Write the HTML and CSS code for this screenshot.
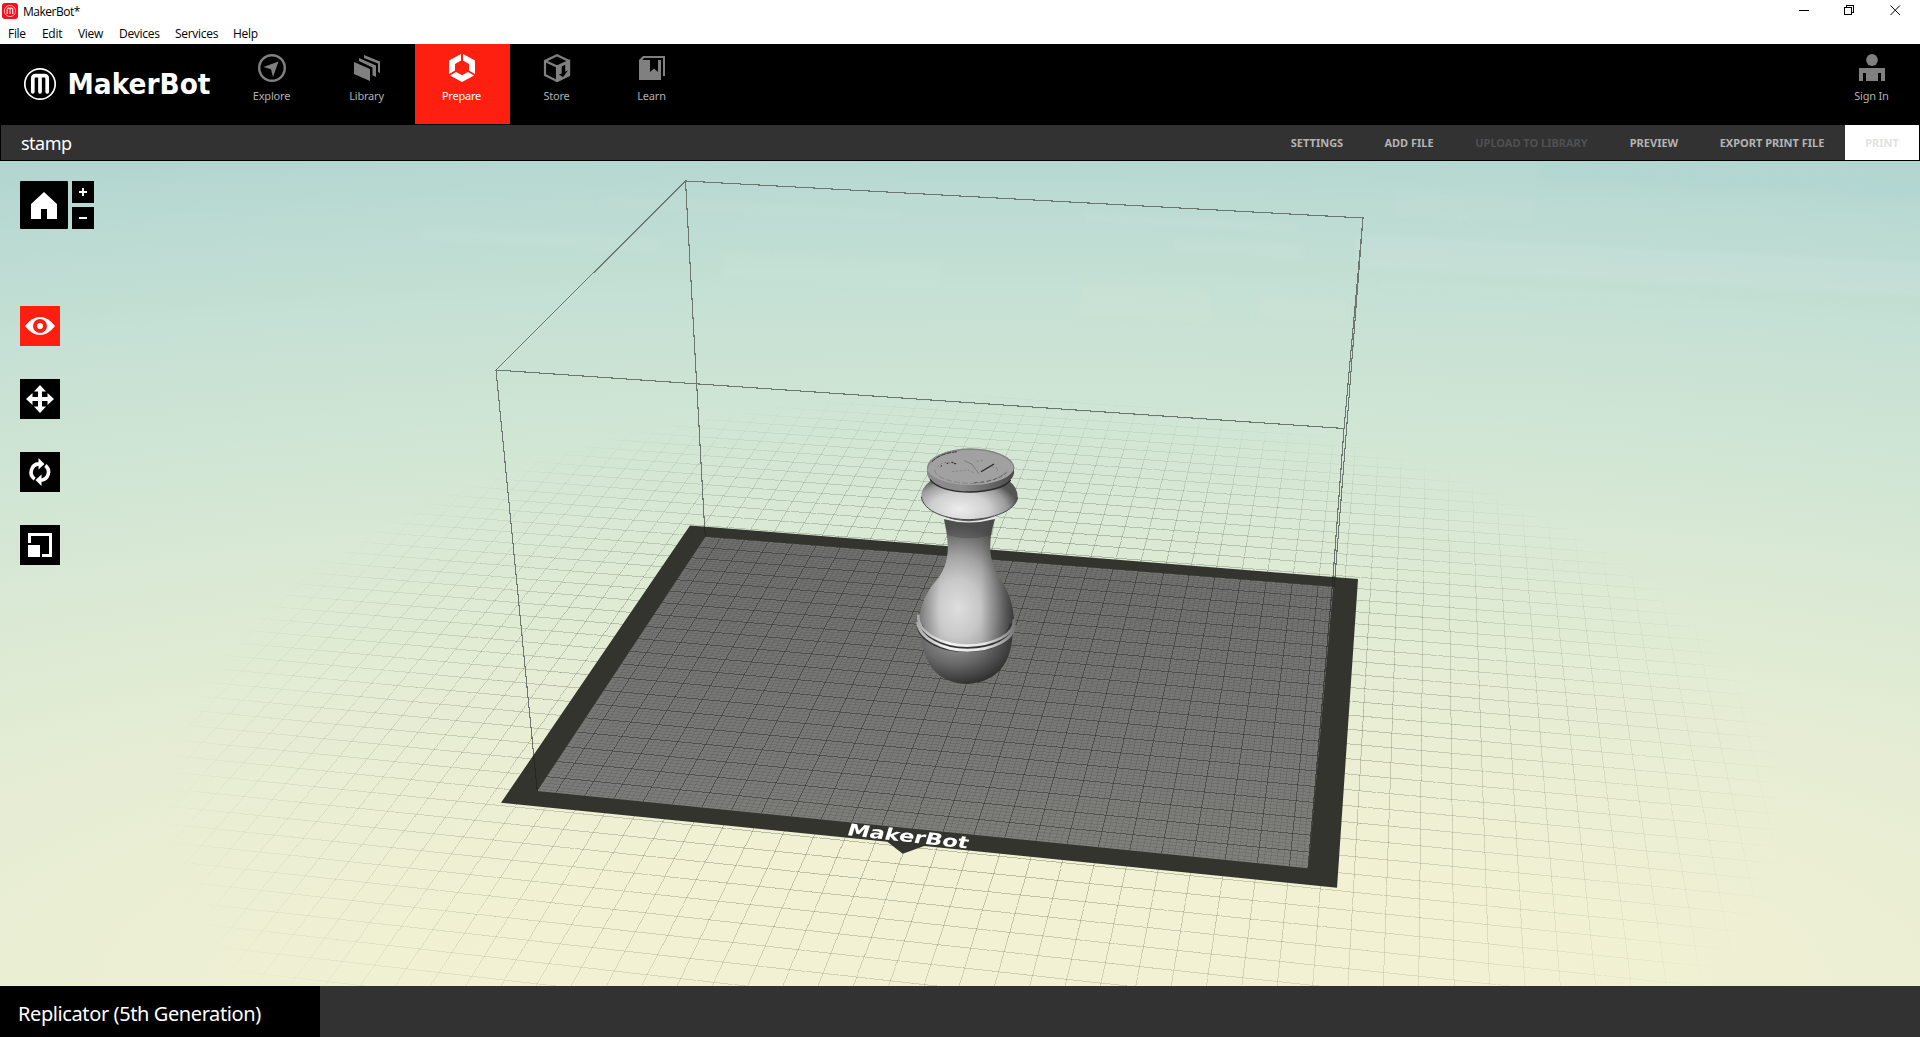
FILE: index.html
```html
<!DOCTYPE html>
<html lang="en">
<head>
<meta charset="utf-8">
<title>MakerBot</title>
<link rel="stylesheet" href="styles.css">
</head>
<body>
<div class="app">
  <header class="titlebar">
    <svg class="app-icon" viewBox="0 0 16 16"><rect width="16" height="16" rx="3" fill="#fb0d1b"/><circle cx="8" cy="8" r="5.6" fill="none" stroke="#ffb3b5" stroke-width="1"/><path d="M5.3 11V6.2q0-1 1-1h3.4q1 0 1 1V11M8 5.2V11" fill="none" stroke="#ffc9ca" stroke-width="1.4"/></svg>
    <span class="app-title">MakerBot*</span>
    <svg class="win-controls" viewBox="0 0 110 20" shape-rendering="crispEdges">
      <path d="M4 10.5h10" stroke="#000"/>
      <path d="M49.500 7.500h7v7h-7zM51.500 7v-1.500h7v7H57" fill="none" stroke="#000"/>
      <path d="M95.500 5.500l9.500 9.500M105 5.500l-9.500 9.500" stroke="#000" shape-rendering="auto"/>
    </svg>
  </header>
  <nav class="menubar">
    <span class="m-file">File</span><span class="m-edit">Edit</span><span class="m-view">View</span><span class="m-devices">Devices</span><span class="m-services">Services</span><span class="m-help">Help</span>
  </nav>

  <div class="mainbar">
    <svg class="logo" viewBox="0 0 200 40">
      <circle cx="20" cy="20" r="15.200" fill="none" stroke="#fff" stroke-width="1.700"/>
      <path d="M12.800 27.800V14.500q0-2.800 2.800-2.800h8.800q2.800 0 2.800 2.800v13.300M20 12v15.800" fill="none" stroke="#fff" stroke-width="3.700" stroke-linecap="round"/>
      <text class="wordmark" x="47.500" y="29.500" textLength="143" lengthAdjust="spacingAndGlyphs">MakerBot</text>
    </svg>
    <div class="tabs">
      <div class="tab">
        <svg viewBox="0 0 28 28"><circle cx="14" cy="14" r="12.800" fill="none" stroke="#808080" stroke-width="2.400"/><path d="M20.500 7.500L5.500 13l7.500 2.300 2 7.700z" fill="#808080"/></svg>
        <span>Explore</span>
      </div>
      <div class="tab">
        <svg viewBox="0 0 28 28" fill="#808080"><path d="M1 8l16 7v12L1 20z"/><path d="M6 4l17 7.500V23l-3.500-1.700V13.500L6 7z"/><path d="M11 1l16 6.500V19l-2-1V9.500L11 4z"/></svg>
        <span>Library</span>
      </div>
      <div class="tab active">
        <svg viewBox="0 0 28 28" fill="#fff"><path d="M13 0L1 6.500V20l6-3.500V10l6-3.500z"/><path d="M15 0l12 6.500V20l-6-3.500V10l-6-3.500z"/><path d="M8 18L2 21.500 14 28l12-6.500L20 18l-6 3.200z"/></svg>
        <span>Prepare</span>
      </div>
      <div class="tab">
        <svg viewBox="0 0 28 28"><path d="M14 1.200L26 7v14l-12 6L2 21V7z" fill="none" stroke="#808080" stroke-width="2.200"/><path d="M2 7l12 5.500L26 7v14l-12 6V12.500" fill="none" stroke="#808080" stroke-width="2.200"/><path d="M14 12.500L26 7v14l-12 6z" fill="#808080"/><path d="M18.700 12.500l3.500-1.700v7l2.800-1.500-5 7-4-2.800 2.700-1z" fill="#000"/></svg>
        <span>Store</span>
      </div>
      <div class="tab">
        <svg viewBox="0 0 28 28"><path d="M1 6l4-4h22v20h-2V4H6L4.500 6H12v12l4-3.500 4 3.500V6h3v20H1z" fill="#808080"/></svg>
        <span>Learn</span>
      </div>
    </div>
    <div class="signin">
      <svg viewBox="0 0 28 28" fill="#808080"><ellipse cx="14" cy="6" rx="5.800" ry="6"/><path d="M1 14h26v13h-4v-8h-3v8H8v-8H5v8H1z"/></svg>
      <span>Sign In</span>
    </div>
  </div>

  <div class="toolbar">
    <span class="doc-name">stamp</span>
    <div class="actions">
      <span class="action a-settings">SETTINGS</span>
      <span class="action a-add">ADD FILE</span>
      <span class="action a-upload disabled">UPLOAD TO LIBRARY</span>
      <span class="action a-preview">PREVIEW</span>
      <span class="action a-export">EXPORT PRINT FILE</span>
      <span class="action a-print">PRINT</span>
    </div>
  </div>

  <main class="viewport">
    <canvas class="scene" id="scene" width="1920" height="825"></canvas>
    <svg class="scene" viewBox="0 161 1920 825">
      <defs>
        <radialGradient id="body" gradientUnits="userSpaceOnUse" cx="0" cy="0" r="1" gradientTransform="translate(235 565) scale(190 250)">
          <stop offset="0" stop-color="#e4e4e4"/><stop offset=".35" stop-color="#cdcdcd"/><stop offset=".62" stop-color="#a8a8a8"/><stop offset=".85" stop-color="#777"/><stop offset="1" stop-color="#5c5c5c"/>
        </radialGradient>
        <linearGradient id="shade" x1="0" x2="1" y1="0" y2="0"><stop offset="0" stop-color="#333" stop-opacity=".4"/><stop offset=".22" stop-color="#555" stop-opacity=".03"/><stop offset=".65" stop-color="#444" stop-opacity=".05"/><stop offset="1" stop-color="#222" stop-opacity=".7"/></linearGradient>
        <radialGradient id="bowl" gradientUnits="userSpaceOnUse" cx="0" cy="0" r="1" gradientTransform="translate(225 660) scale(190 140)">
          <stop offset="0" stop-color="#9a9a9a"/><stop offset=".5" stop-color="#6a6a6a"/><stop offset="1" stop-color="#2c2c2c"/>
        </radialGradient>
        <radialGradient id="collar" gradientUnits="userSpaceOnUse" cx="0" cy="0" r="1" gradientTransform="translate(240 268) scale(175 100)">
          <stop offset="0" stop-color="#ededed"/><stop offset=".5" stop-color="#cfcfcf"/><stop offset=".8" stop-color="#9b9b9b"/><stop offset="1" stop-color="#555"/>
        </radialGradient>
        <linearGradient id="rim" x1="0" x2="1" y1="0" y2="0"><stop offset="0" stop-color="#8a8a8a"/><stop offset=".4" stop-color="#8b8b8b"/><stop offset="1" stop-color="#4a4a4a"/></linearGradient>
        <linearGradient id="ring" x1="0" x2="1" y1="0" y2="0"><stop offset="0" stop-color="#aaa"/><stop offset=".3" stop-color="#f4f4f4"/><stop offset=".7" stop-color="#e4e4e4"/><stop offset="1" stop-color="#777"/></linearGradient>
      </defs>
      <g fill="none" stroke="#6b776f" stroke-width="1.100" shape-rendering="crispEdges">
        <path d="M685.500 181L1363 218L1344 428.500L496 370Z"/>
        <path d="M685.500 181L704.500 526M1363 218L1335 577M1344 428.500L1333 577M496 370L532 738"/>
        <path d="M704.500 526l1 11M1335 577l-1 10M532 738l5.300 53M1333 577L1308 868" stroke="#20211d" stroke-opacity=".6"/>
      </g>
      <text class="plate-mark" transform="matrix(1 .112 -.3 .94 846 835)" textLength="121" lengthAdjust="spacingAndGlyphs">MakerBot</text>
      <g transform="translate(880 420) scale(.33333)">
        <path d="M120 610Q122 790 265 792Q392 780 398 640L400 600H120Z" fill="url(#bowl)"/>
        <path d="M190 290C200 330 205 370 203 395C200 440 180 470 160 492C130 530 118 570 119 615C130 655 190 676 262 676C335 674 396 650 402 605C402 560 385 510 362 478C340 445 328 410 331 370C333 335 340 310 347 290Z" fill="url(#body)"/>
        <path d="M190 290C200 330 205 370 203 395C200 440 180 470 160 492C130 530 118 570 119 615C130 655 190 676 262 676C335 674 396 650 402 605C402 560 385 510 362 478C340 445 328 410 331 370C333 335 340 310 347 290Z" fill="url(#shade)"/>
        <path d="M192 296Q265 320 345 296L337 345Q265 365 202 345Z" fill="#333" opacity=".3"/>
        <g fill="none">
          <path d="M119 618C130 662 190 687 262 686C336 684 390 662 399 612" stroke="#333" stroke-width="20"/>
          <path d="M115 584C110 640 190 677 262 677C340 675 405 645 402 598" stroke="url(#ring)" stroke-width="8"/>
          <path d="M113 606C116 655 190 691 262 691C340 689 401 660 404 614" stroke="url(#ring)" stroke-width="9"/>
        </g>
        <path d="M182 285Q265 322 352 285L345 297Q265 318 190 297Z" fill="#e3e3e3"/>
        <path d="M180 280Q265 314 354 280" fill="none" stroke="#333" stroke-width="3"/>
        <path d="M152 182Q122 205 124 230C130 275 200 299 268 299C340 297 407 272 413 232Q413 200 386 182Z" fill="url(#collar)"/>
        <path d="M413 232C407 272 340 297 268 299C200 299 130 275 124 230" fill="none" stroke="#444" stroke-width="3"/>
        <path d="M141 148V160C145 195 205 216 270 216C335 215 395 195 402 160V145Z" fill="url(#rim)"/>
        <path d="M150 178C170 205 220 216 270 216C325 215 375 203 392 180" fill="none" stroke="#292929" stroke-width="4"/>
        <ellipse cx="271.500" cy="141" rx="130.500" ry="54" fill="#a1a1a1"/>
        <path d="M142 148C145 115 200 88 270 87C340 88 400 112 402 145" fill="none" stroke="#858585" stroke-width="4"/>
        <g fill="none" stroke="#777" stroke-width="2">
          <path d="M164 150C165 174 220 190 275 190C325 188 365 174 382 150" stroke-dasharray="18 6"/>
          <path d="M156 125Q180 100 232 95" stroke="#333" stroke-width="3" stroke-dasharray="14 3"/>
          <path d="M282 188Q350 185 380 158" stroke="#444" stroke-dasharray="12 7"/>
          <path d="M252 122L275 132L298 163" stroke="#666"/>
          <path d="M303 155L342 132" stroke="#222" stroke-width="3.500"/>
          <path d="M172 140L190 127L230 130M215 155L262 150L282 158M290 124L312 121M335 140l20 6-8 12" stroke="#777" stroke-dasharray="7 5"/>
          <path d="M182 139l4-2M200 130h5M214 127h6M222 131h6" stroke="#222" stroke-width="3"/>
        </g>
      </g>
    </svg>

    <div class="view-tools">
      <div class="home-row">
        <div class="btn home"><svg viewBox="0 0 48 48"><path d="M24 11l13 12v15H27V28h-6v10H11V23z" fill="#fff"/></svg></div>
        <div class="zoom-col">
          <div class="btn small"><svg viewBox="0 0 22 22"><path d="M7 11h8M11 7v8" stroke="#fff" stroke-width="2"/></svg></div>
          <div class="btn small"><svg viewBox="0 0 22 22"><path d="M7 11h8" stroke="#fff" stroke-width="2"/></svg></div>
        </div>
      </div>
      <div class="tool-col">
        <div class="btn tool on"><svg viewBox="0 0 40 40"><path d="M5 20Q12 11 20 11T35 20Q28 29 20 29T5 20z" fill="#fff"/><circle cx="20" cy="20" r="5" fill="none" stroke="#ff1f10" stroke-width="4"/></svg></div>
        <div class="btn tool"><svg viewBox="0 0 40 40" fill="#fff"><path d="M20 6l6 6.500h-4V18h5.500v-4L34 20l-6.500 6v-4H22v5.500h4L20 34l-6-6.500h4V22h-5.500v4L6 20l6.500-6v4H18v-5.500h-4z"/></svg></div>
        <div class="btn tool"><svg viewBox="0 0 40 40"><path d="M14.700 27A8.300 8.300 0 0 1 19 11.900M25.300 13.500A8.300 8.300 0 0 1 21 28.300" fill="none" stroke="#fff" stroke-width="3.600"/><path d="M18.500 6l6 6-6 5.500zM21.500 34l-6-6 6-5.500z" fill="#fff"/></svg></div>
        <div class="btn tool"><svg viewBox="0 0 40 40"><path d="M9.500 18V9.500h21v21H22" fill="none" stroke="#fff" stroke-width="3"/><path d="M8 20h12v12H8z" fill="#fff"/></svg></div>
      </div>
    </div>
  </main>

  <footer class="statusbar"><div class="printer">Replicator (5th Generation)</div></footer>
</div>
<script src="scene.js"></script>
</body>
</html>
```
FILE: styles.css
```css
* { box-sizing: border-box; }
html, body { margin: 0; height: 100%; overflow: hidden; }
body { font-family: "Noto Sans", "Open Sans", sans-serif; background: #000; }
.app { width: 1920px; height: 1037px; display: flex; flex-direction: column; }

.titlebar { height: 22px; background: #fff; display: flex; align-items: center; padding-left: 2px; }
.app-icon { width: 16px; height: 16px; }
.app-title { font: 12px "Open Sans", sans-serif; letter-spacing: -.5px; margin-left: 5px; flex: 1; color: #000; padding-top: 1px; }
.win-controls { width: 110px; height: 20px; margin: 0 15px 2px 0; }

.menubar { height: 22px; background: #fff; display: flex; align-items: center; padding: 2px 0 0 8px; font: 12px/20px "Open Sans", sans-serif; letter-spacing: -.3px; color: #000; white-space: nowrap; }
.m-file { width: 34px; }
.m-edit { width: 36px; }
.m-view { width: 41px; }
.m-devices { width: 56px; }
.m-services { width: 58px; }

.mainbar { height: 81px; background: #000; display: flex; }
.logo { width: 200px; height: 40px; margin-top: 20px; margin-left: 20px; }
.wordmark { font: bold 29px "DejaVu Sans", sans-serif; fill: #fff; }
.tabs { display: flex; margin-left: 5px; }
.tab, .signin { width: 95px; height: 80px; padding: 10px 2px 0 0; display: flex; flex-direction: column; align-items: center; font-size: 11px; line-height: 16px; letter-spacing: -.2px; color: #b0b0b0; }
.tab svg, .signin svg { width: 28px; height: 28px; margin-bottom: 6px; }
.tab.active { background: #ff1f10; color: #fff; }
.signin { margin-left: auto; }

.toolbar { height: 36px; background: #323232; border: solid #000; border-width: 0 1px 1px; display: flex; align-items: stretch; justify-content: space-between; line-height: 36px; }
.doc-name { font-size: 18px; letter-spacing: -.5px; color: #fff; padding-left: 20px; }
.actions { display: flex; font-size: 11px; font-weight: 700; color: #b4b4b4; }
.action { text-align: center; white-space: nowrap; letter-spacing: 0; }
.disabled { color: #505050; }
.a-settings { width: 94px; }
.a-add { width: 90px; }
.a-upload { width: 155px; }
.a-preview { width: 90px; }
.a-export { width: 146px; }
.a-print { width: 74px; background: #fff; color: #e2e2e2; }

.viewport { position: relative; height: 825px; background: radial-gradient(ellipse 3200px 850px at 53% 100%, #f3f1d3 0, #f3f1d3 16%, #e3ecd4 42%, #d4e7d4 62%, #c5e0d4 82%, #b6d8d2 98%, #b3d6d1 100%); }
.scene { position: absolute; left: 0; top: 0; width: 1920px; height: 825px; }
.plate-mark { font: bold 17px "DejaVu Sans", sans-serif; fill: #fff; }

.view-tools { position: absolute; left: 20px; top: 20px; display: flex; flex-direction: column; gap: 77px; }
.home-row { display: flex; gap: 4px; }
.zoom-col { display: flex; flex-direction: column; gap: 4px; }
.tool-col { display: flex; flex-direction: column; gap: 33px; }
.btn { background: #000; }
.btn svg { display: block; width: 100%; height: 100%; }
.home { width: 48px; height: 48px; border-radius: 1px; }
.small { width: 22px; height: 22px; }
.tool { width: 40px; height: 40px; }
.tool.on { background: #ff1f10; }

.statusbar { height: 51px; background: #323232; display: flex; }
.printer { width: 320px; background: #000; color: #fff; font-size: 20px; line-height: 56px; letter-spacing: -.4px; padding-left: 18px; white-space: nowrap; }
```
FILE: scene.js
```js
// Build volume floor, in millimetres, projected to screen space.
const W = 252, D = 199, REACH = 280, TOP = 161;
const inner = [[705.5, 536.7], [1333.3, 586.7], [1308.3, 868.3], [537.3, 791]];
const outer = [[690, 525.5], [1358, 579], [1337, 887.7], [924.3, 846], [902.7, 853.7], [887.3, 841.7], [501, 802.7]];
const ctx = document.getElementById('scene').getContext('2d');
ctx.translate(0, -TOP);

const [A, B, C, E] = inner;
const dx1 = B[0] - C[0], dx2 = E[0] - C[0], sx = A[0] - B[0] + C[0] - E[0];
const dy1 = B[1] - C[1], dy2 = E[1] - C[1], sy = A[1] - B[1] + C[1] - E[1];
const det = dx1 * dy2 - dx2 * dy1;
const g = (sx * dy2 - dx2 * sy) / det, h = (dx1 * sy - sx * dy1) / det;
function project(u, v) {
  u /= W; v /= D;
  const w = g * u + h * v + 1;
  return [
    ((B[0] - A[0] + g * B[0]) * u + (E[0] - A[0] + h * E[0]) * v + A[0]) / w,
    ((B[1] - A[1] + g * B[1]) * u + (E[1] - A[1] + h * E[1]) * v + A[1]) / w
  ];
}

// Aliased one-pixel line.
function pixelLine(p, q) {
  const n = Math.max(Math.abs(q[0] - p[0]), Math.abs(q[1] - p[1]));
  const k = Math.max(1, Math.round(n));
  for (let i = 0; i < k; i++) {
    ctx.fillRect(Math.round(p[0] + (q[0] - p[0]) * i / k), Math.round(p[1] + (q[1] - p[1]) * i / k), 1, 1);
  }
}
function polygon(points) {
  ctx.beginPath();
  points.forEach(p => ctx.lineTo(p[0], p[1]));
  ctx.closePath();
}

// Faint skyline bands of the backdrop.
function haze(x, y, w, hgt, color) {
  ctx.fillStyle = color;
  ctx.beginPath();
  ctx.moveTo(x, y); ctx.lineTo(x + w, y + w * 0.05);
  ctx.lineTo(x + w, y + w * 0.05 + hgt); ctx.lineTo(x, y + hgt);
  ctx.fill();
}
ctx.filter = 'blur(3px)';
haze(1355, 234, 580, 34, 'rgba(215,232,230,.2)');
haze(1395, 190, 140, 26, 'rgba(220,238,230,.1)');
haze(1175, 238, 130, 14, 'rgba(225,240,230,.12)');
haze(1085, 212, 215, 10, 'rgba(220,238,232,.12)');
haze(1080, 282, 130, 34, 'rgba(225,236,215,.12)');
haze(1258, 295, 90, 24, 'rgba(225,236,215,.1)');
haze(420, 225, 240, 16, 'rgba(225,240,232,.09)');
haze(600, 195, 300, 12, 'rgba(225,240,232,.08)');
haze(720, 250, 220, 30, 'rgba(225,238,225,.07)');
haze(1380, 283, 320, 5, 'rgba(225,240,225,.12)');
haze(1540, 161, 400, 20, 'rgba(160,205,203,.12)');
ctx.filter = 'none';

// Floor grid, fading with distance from the plate centre.
function fadeLine(fixedU, at) {
  const c = fixedU ? at - W / 2 : at - D / 2;
  const half = Math.sqrt(Math.max(0, REACH * REACH - c * c));
  const mid = fixedU ? D / 2 : W / 2;
  const step = 4;
  for (let t = -half; t < half; t += step) {
    const d = Math.hypot(c, t);
    const a = 0.32 * Math.min(1, 1.7 * (1 - d / REACH));
    if (a <= 0) continue;
    const p = fixedU ? project(at, mid + t) : project(mid + t, at);
    const q = fixedU ? project(at, mid + t + step) : project(mid + t + step, at);
    ctx.fillStyle = `rgba(70,80,62,${a})`;
    pixelLine(p, q);
  }
}
for (let k = -30; k <= 30; k++) {
  fadeLine(true, W / 2 + k * 10);
  fadeLine(false, D / 2 + k * 10);
}

// Plate.
polygon(outer);
ctx.fillStyle = '#33342e';
ctx.fill();
const fill = ctx.createLinearGradient(0, 537, 0, 868);
fill.addColorStop(0, '#6f706e');
fill.addColorStop(1, '#7f807b');
polygon(inner);
ctx.fillStyle = fill;
ctx.fill();

ctx.save();
polygon(inner);
ctx.clip();
ctx.fillStyle = 'rgba(50,50,48,.14)';
for (let k = -62; k <= 62; k++) if (k % 5) pixelLine(project(W / 2 + k * 2, 0), project(W / 2 + k * 2, D));
for (let k = -49; k <= 49; k++) if (k % 5) pixelLine(project(0, D / 2 + k * 2), project(W, D / 2 + k * 2));
ctx.fillStyle = 'rgba(40,40,38,.5)';
for (let k = -12; k <= 12; k++) pixelLine(project(W / 2 + k * 10, 0), project(W / 2 + k * 10, D));
for (let k = -10; k <= 10; k++) pixelLine(project(0, D / 2 + k * 10), project(W, D / 2 + k * 10));
ctx.restore();
```
